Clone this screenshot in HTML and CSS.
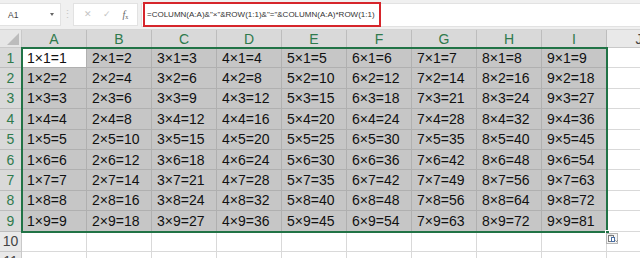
FILE: index.html
```html
<!DOCTYPE html>
<html>
<head>
<meta charset="utf-8">
<link rel="stylesheet" href="styles.css">
</head>
<body>
<div class="app">
  <div class="fbar">
    <div class="namebox"><span class="nb-text">A1</span><span class="nb-arrow"></span></div>
    <div class="grip">⋮</div>
    <div class="btns">
      <span class="btn x">✕</span>
      <span class="btn ok">✓</span>
      <span class="btn fx"><i>f</i><sub>x</sub></span>
    </div>
    <div class="formula"><span class="ftext">=COLUMN(A:A)&amp;"×"&amp;ROW(1:1)&amp;"="&amp;COLUMN(A:A)*ROW(1:1)</span></div>
  </div>
  <div class="sheet">
    <div class="corner"><span class="tri"></span></div>
    <div class="ch sel">A</div><div class="ch sel">B</div><div class="ch sel">C</div><div class="ch sel">D</div><div class="ch sel">E</div><div class="ch sel">F</div><div class="ch sel">G</div><div class="ch sel">H</div><div class="ch sel">I</div><div class="ch">J</div>

    <div class="rh sel">1</div><div class="c act">1×1=1</div><div class="c s">2×1=2</div><div class="c s">3×1=3</div><div class="c s">4×1=4</div><div class="c s">5×1=5</div><div class="c s">6×1=6</div><div class="c s">7×1=7</div><div class="c s">8×1=8</div><div class="c s">9×1=9</div><div class="c"></div>
    <div class="rh sel">2</div><div class="c s">1×2=2</div><div class="c s">2×2=4</div><div class="c s">3×2=6</div><div class="c s">4×2=8</div><div class="c s">5×2=10</div><div class="c s">6×2=12</div><div class="c s">7×2=14</div><div class="c s">8×2=16</div><div class="c s">9×2=18</div><div class="c"></div>
    <div class="rh sel">3</div><div class="c s">1×3=3</div><div class="c s">2×3=6</div><div class="c s">3×3=9</div><div class="c s">4×3=12</div><div class="c s">5×3=15</div><div class="c s">6×3=18</div><div class="c s">7×3=21</div><div class="c s">8×3=24</div><div class="c s">9×3=27</div><div class="c"></div>
    <div class="rh sel">4</div><div class="c s">1×4=4</div><div class="c s">2×4=8</div><div class="c s">3×4=12</div><div class="c s">4×4=16</div><div class="c s">5×4=20</div><div class="c s">6×4=24</div><div class="c s">7×4=28</div><div class="c s">8×4=32</div><div class="c s">9×4=36</div><div class="c"></div>
    <div class="rh sel">5</div><div class="c s">1×5=5</div><div class="c s">2×5=10</div><div class="c s">3×5=15</div><div class="c s">4×5=20</div><div class="c s">5×5=25</div><div class="c s">6×5=30</div><div class="c s">7×5=35</div><div class="c s">8×5=40</div><div class="c s">9×5=45</div><div class="c"></div>
    <div class="rh sel">6</div><div class="c s">1×6=6</div><div class="c s">2×6=12</div><div class="c s">3×6=18</div><div class="c s">4×6=24</div><div class="c s">5×6=30</div><div class="c s">6×6=36</div><div class="c s">7×6=42</div><div class="c s">8×6=48</div><div class="c s">9×6=54</div><div class="c"></div>
    <div class="rh sel">7</div><div class="c s">1×7=7</div><div class="c s">2×7=14</div><div class="c s">3×7=21</div><div class="c s">4×7=28</div><div class="c s">5×7=35</div><div class="c s">6×7=42</div><div class="c s">7×7=49</div><div class="c s">8×7=56</div><div class="c s">9×7=63</div><div class="c"></div>
    <div class="rh sel">8</div><div class="c s">1×8=8</div><div class="c s">2×8=16</div><div class="c s">3×8=24</div><div class="c s">4×8=32</div><div class="c s">5×8=40</div><div class="c s">6×8=48</div><div class="c s">7×8=56</div><div class="c s">8×8=64</div><div class="c s">9×8=72</div><div class="c"></div>
    <div class="rh sel">9</div><div class="c s">1×9=9</div><div class="c s">2×9=18</div><div class="c s">3×9=27</div><div class="c s">4×9=36</div><div class="c s">5×9=45</div><div class="c s">6×9=54</div><div class="c s">7×9=63</div><div class="c s">8×9=72</div><div class="c s">9×9=81</div><div class="c"></div>
    <div class="rh">10</div><div class="c"></div><div class="c"></div><div class="c"></div><div class="c"></div><div class="c"></div><div class="c"></div><div class="c"></div><div class="c"></div><div class="c"></div><div class="c"></div>
    <div class="rh">11</div><div class="c"></div><div class="c"></div><div class="c"></div><div class="c"></div><div class="c"></div><div class="c"></div><div class="c"></div><div class="c"></div><div class="c"></div><div class="c"></div>

    <div class="range"><span class="handle"></span></div>
    <div class="paste">
      <svg width="12" height="11" viewBox="0 0 12 11"><rect x="0.5" y="0.5" width="11" height="10" fill="#f4f4f4" stroke="#b5b5b5"/><rect x="2.5" y="2.5" width="5" height="6" fill="#fff" stroke="#7a7a7a"/><rect x="3.5" y="1.8" width="3" height="1.4" fill="#7a7a7a"/><rect x="5.5" y="4.5" width="3" height="4" fill="#fff" stroke="#4a6fa5"/><path d="M9.5 7.5 l1 1 l1 -1" fill="none" stroke="#555" stroke-width="0.8"/></svg>
    </div>
  </div>
</div>
</body>
</html>
```

FILE: styles.css
```css
* { box-sizing: border-box; }
html, body { margin: 0; padding: 0; }
body { width: 640px; height: 258px; overflow: hidden; background: #fff; font-family: "Liberation Sans", Arial, sans-serif; }
.app { width: 640px; height: 258px; overflow: hidden; }

.fbar { height: 30px; background: #f0f0f0; border-bottom: 1px solid #d5d5d5; display: flex; align-items: center; padding: 3px 0 3px 0; }
.namebox { width: 61px; height: 23px; background: #fff; border: 1px solid #e2e2e2; border-left: none; display: flex; align-items: center; justify-content: space-between; padding: 0 6px 0 8px; }
.nb-text { font-size: 8.5px; color: #444; }
.nb-arrow { width: 0; height: 0; border-left: 2.5px solid transparent; border-right: 2.5px solid transparent; border-top: 3px solid #666; }
.grip { width: 13px; text-align: center; color: #c8c8c8; font-size: 11px; line-height: 1; }
.btns { width: 65px; height: 23px; background: #fff; border: 1px solid #e2e2e2; display: flex; align-items: center; justify-content: space-around; padding: 0 3px 0 4px; margin-left: -1px; }
.btn { color: #c4c4c4; font-size: 9px; line-height: 1; }
.btn.fx { color: #666; font-family: "Liberation Serif", serif; font-size: 10px; }
.btn.fx sub { font-size: 6px; vertical-align: -1px; }
.formula { flex: 1; height: 24px; background: #fff; border: 1px solid #e2e2e2; border-right: none; margin-left: 3px; padding-left: 1px; display: flex; align-items: center; }
.ftext { display: inline-flex; align-items: center; height: 25px; width: 238px; border: 2px solid #d6252b; font-size: 8px; color: #333; padding-left: 2px; white-space: nowrap; margin-top: 0; }

.sheet { position: relative; display: grid; grid-template-columns: 22px repeat(10, 65px); grid-template-rows: 18px repeat(10, 20.4px) 20px; }
.corner { background: #e6e6e6; border-right: 1px solid #c9c9c9; border-bottom: 1px solid #c9c9c9; position: relative; }
.tri { position: absolute; right: 2px; bottom: 2px; width: 0; height: 0; border-left: 12px solid transparent; border-bottom: 12px solid #bcbcbc; }
.ch { background: #e9e9e9; border-right: 1px solid #c9c9c9; border-bottom: 1px solid #c9c9c9; color: #444; font-size: 14px; display: flex; align-items: center; justify-content: center; }
.ch.sel { background: #d9d9d9; color: #2f7a4c; border-right-color: #bdbdbd; border-bottom: 1px solid #217346; }
.rh { background: #e9e9e9; border-right: 1px solid #c9c9c9; border-bottom: 1px solid #c9c9c9; color: #444; font-size: 14px; display: flex; align-items: center; justify-content: center; }
.rh.sel { background: #d9d9d9; color: #2f7a4c; border-bottom-color: #bdbdbd; border-right: 1px solid #217346; }
.c { border-right: 1px solid #d9d9d9; border-bottom: 1px solid #d9d9d9; font-size: 14px; color: #111; display: flex; align-items: center; padding-left: 5px; white-space: nowrap; }
.c.s { background: #c6c6c6; border-right-color: #b0b0b0; border-bottom-color: #b0b0b0; }
.c.act { background: #fff; border-right-color: #b0b0b0; border-bottom-color: #b0b0b0; }

.range { position: absolute; left: 21px; top: 17px; width: 587px; height: 185.6px; border: 2px solid #217346; pointer-events: none; }
.handle { position: absolute; right: -4px; bottom: -4px; width: 5px; height: 5px; background: #217346; border: 1px solid #fff; }
.paste { position: absolute; left: 606px; top: 203px; width: 13px; height: 12px; }
.paste svg { display: block; }
```
